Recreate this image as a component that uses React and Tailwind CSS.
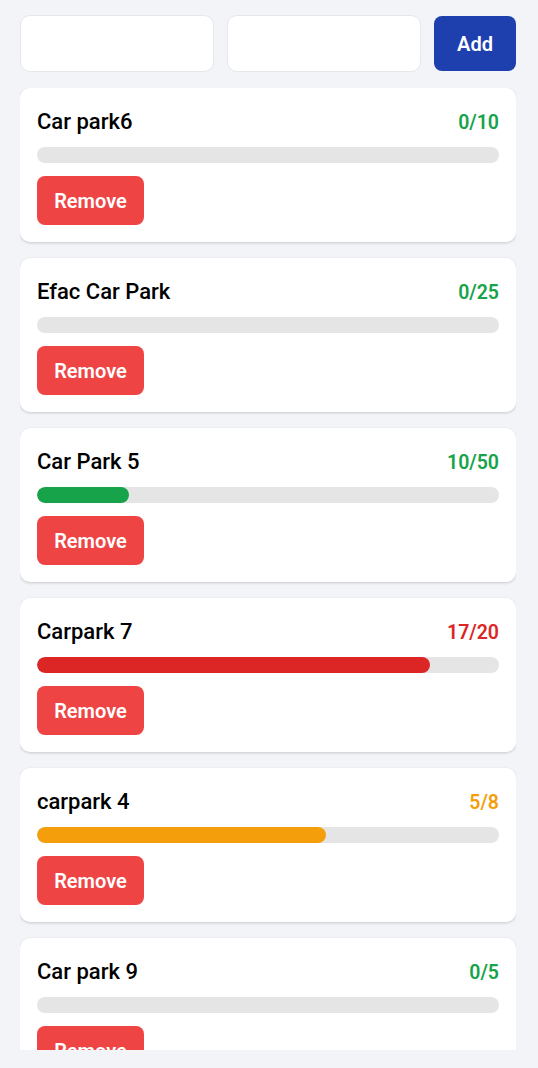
import { useState } from "react";

const initialParks = [
  { id: 1, name: "Car park6", used: 0, capacity: 10 },
  { id: 2, name: "Efac Car Park", used: 0, capacity: 25 },
  { id: 3, name: "Car Park 5", used: 10, capacity: 50 },
  { id: 4, name: "Carpark 7", used: 17, capacity: 20 },
  { id: 5, name: "carpark 4", used: 5, capacity: 8 },
  { id: 6, name: "Car park 9", used: 0, capacity: 5 },
];

// pick colour by fill ratio
function levelColors(used, capacity) {
  const ratio = capacity ? used / capacity : 0;
  if (ratio >= 0.8) return { text: "text-[#dc2626]", bar: "bg-[#dc2626]" };
  if (ratio >= 0.5) return { text: "text-[#f59e0b]", bar: "bg-[#f59e0b]" };
  return { text: "text-[#16a34a]", bar: "bg-[#16a34a]" };
}

function ParkCard({ park, onRemove }) {
  const colors = levelColors(park.used, park.capacity);
  const pct = park.capacity ? (park.used / park.capacity) * 100 : 0;

  return (
    <div className="shrink-0 rounded-[10px] bg-white px-[17px] pt-[19px] pb-[17px] shadow-[0_1px_3px_rgba(0,0,0,0.18)]">
      <div className="flex h-[30px] items-baseline justify-between">
        <span className="text-[22px] leading-[30px] font-medium text-black">{park.name}</span>
        <span className={`text-[19.5px] leading-[30px] font-semibold ${colors.text}`}>
          {park.used}/{park.capacity}
        </span>
      </div>
      <div className="mt-[10px] h-4 w-full overflow-hidden rounded-full bg-[#e5e5e5]">
        <div className={`h-full rounded-full ${colors.bar}`} style={{ width: `${pct}%` }} />
      </div>
      <button
        type="button"
        onClick={() => onRemove(park.id)}
        className="mt-[13px] h-[49px] w-[107px] rounded-lg bg-[#ef4444] text-[20px] font-semibold text-white"
      >
        Remove
      </button>
    </div>
  );
}

export default function App() {
  const [parks, setParks] = useState(initialParks);
  const [name, setName] = useState("");
  const [capacity, setCapacity] = useState("");

  const handleAdd = () => {
    if (!name || !capacity) return;
    setParks([...parks, { id: Date.now(), name, used: 0, capacity: Number(capacity) }]);
    setName("");
    setCapacity("");
  };

  const handleRemove = (id) => setParks(parks.filter((p) => p.id !== id));

  const inputClass =
    "h-[57px] min-w-0 flex-1 rounded-[10px] border border-[#e5e7eb] bg-white px-3 text-[18px] outline-none";

  return (
    <main className="flex h-screen flex-col bg-[#f3f4f8] pl-5 pr-[22px] pt-[15px] pb-[18px] font-['Roboto',sans-serif]">
      <div className="flex items-center gap-[13px]">
        <input className={inputClass} value={name} onChange={(e) => setName(e.target.value)} />
        <input className={inputClass} value={capacity} onChange={(e) => setCapacity(e.target.value)} />
        <button
          type="button"
          onClick={handleAdd}
          className="h-[55px] w-[82px] shrink-0 rounded-lg bg-[#1e40af] text-[20px] font-semibold text-white"
        >
          Add
        </button>
      </div>

      <div className="mt-4 flex min-h-0 flex-1 flex-col gap-4 overflow-hidden">
        {parks.map((p) => (
          <ParkCard key={p.id} park={p} onRemove={handleRemove} />
        ))}
      </div>
    </main>
  );
}
